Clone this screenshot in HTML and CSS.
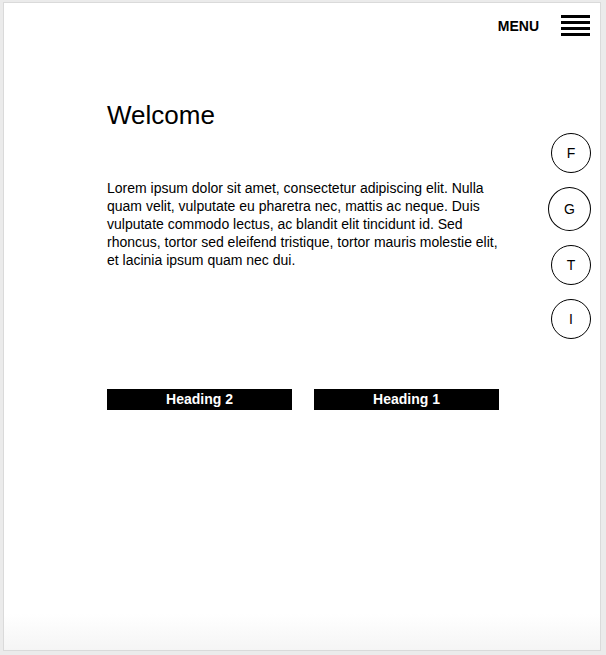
FILE: index.html
```html
<!DOCTYPE html>
<html lang="en">
<head>
<meta charset="utf-8">
<title>Welcome</title>
<link rel="stylesheet" href="styles.css">
</head>
<body>
<div class="window">
  <header class="topbar">
    <span class="menu-label">MENU</span>
    <span class="hamburger" aria-label="Menu">
      <span class="bar"></span><span class="bar"></span><span class="bar"></span><span class="bar"></span>
    </span>
  </header>
  <main class="main">
    <section class="content">
      <h1 class="title">Welcome</h1>
      <p class="intro">Lorem ipsum dolor sit amet, consectetur adipiscing elit. Nulla quam velit, vulputate eu pharetra nec, mattis ac neque. Duis vulputate commodo lectus, ac blandit elit tincidunt id. Sed rhoncus, tortor sed eleifend tristique, tortor mauris molestie elit, et lacinia ipsum quam nec dui.</p>
      <div class="headings">
        <div class="heading-box">Heading 2</div>
        <div class="heading-box">Heading 1</div>
      </div>
    </section>
    <nav class="social">
      <a class="circle">F</a>
      <a class="circle circle-wide">G</a>
      <a class="circle">T</a>
      <a class="circle">I</a>
    </nav>
  </main>
</div>
</body>
</html>
```
FILE: styles.css
```css
html {
  background: #ebebeb;
}
body {
  margin: 0;
  font-family: "Liberation Sans", Arial, Helvetica, sans-serif;
  color: #000;
}
.window {
  box-sizing: border-box;
  margin: 2px 5px 4px 3px;
  height: 649px;
  border: 1px solid #dadada;
  background: linear-gradient(to bottom, #ffffff calc(100% - 36px), #f5f5f5 100%);
}
.topbar {
  display: flex;
  justify-content: flex-end;
  align-items: center;
  padding: 12px 10px 0 0;
}
.menu-label {
  font-weight: bold;
  font-size: 14px;
  line-height: 16px;
  margin-right: 22px;
}
.hamburger {
  display: flex;
  flex-direction: column;
  gap: 3px;
  width: 29px;
}
.bar {
  display: block;
  height: 3px;
  background: #000;
}
.main {
  display: flex;
  align-items: flex-start;
  margin-top: 64px;
}
.content {
  margin-left: 103px;
  width: 392px;
}
.title {
  margin: 0;
  font-size: 26px;
  line-height: 30px;
  font-weight: normal;
}
.intro {
  margin: 49px 0 0;
  font-size: 14px;
  line-height: 18px;
}
.headings {
  display: flex;
  gap: 22px;
  margin-top: 120px;
}
.heading-box {
  flex: 1;
  height: 21px;
  background: #000;
  color: #fff;
  font-weight: bold;
  font-size: 14px;
  line-height: 21px;
  text-align: center;
}
.social {
  margin-left: auto;
  margin-right: 9px;
  margin-top: 33px;
  display: flex;
  flex-direction: column;
  align-items: flex-end;
  gap: 14px;
}
.circle {
  box-sizing: border-box;
  width: 40px;
  height: 40px;
  border: 1px solid #000;
  border-radius: 50%;
  display: flex;
  align-items: center;
  justify-content: center;
  padding-bottom: 1px;
  font-size: 14px;
  color: #000;
}
.circle-wide {
  width: 43px;
  height: 44px;
}
```
